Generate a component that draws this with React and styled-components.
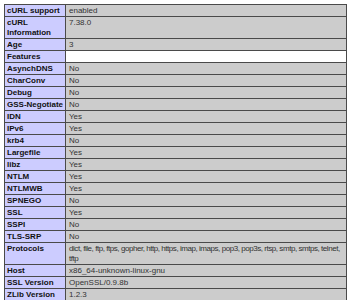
import React from "react";
import styled, { createGlobalStyle } from "styled-components";

const GlobalStyle = createGlobalStyle`
  body {
    margin: 0;
    background: #ffffff;
    font-family: "Liberation Sans", Arial, sans-serif;
  }
`;

const Page = styled.div`
  padding: 4px 0 0 4px;
`;

const Table = styled.table`
  border-collapse: collapse;
  width: 343px;
  table-layout: fixed;
`;

const Row = styled.tr``;

const Label = styled.td`
  width: 57px;
  background: #ccccff;
  color: #111;
  font-weight: bold;
  font-size: 8px;
  line-height: 10px;
  padding: 1px 1px 0 2px;
  border: 1px solid #4a4a4a;
  vertical-align: top;
  white-space: ${({ $wrap }) => ($wrap ? "normal" : "nowrap")};
  overflow: hidden;
`;

const Value = styled.td`
  background: ${({ $blank }) => ($blank ? "#ffffff" : "#cccccc")};
  color: #333;
  font-size: 8px;
  line-height: 10px;
  padding: 1px 1px 0 3px;
  border: 1px solid #4a4a4a;
  vertical-align: top;
  letter-spacing: ${({ $tight }) => ($tight ? "-0.45px" : "normal")};
`;

const rows = [
  ["cURL support", "enabled"],
  ["cURL Information", "7.38.0"],
  ["Age", "3"],
  ["Features", null],
  ["AsynchDNS", "No"],
  ["CharConv", "No"],
  ["Debug", "No"],
  ["GSS-Negotiate", "No"],
  ["IDN", "Yes"],
  ["IPv6", "Yes"],
  ["krb4", "No"],
  ["Largefile", "Yes"],
  ["libz", "Yes"],
  ["NTLM", "Yes"],
  ["NTLMWB", "Yes"],
  ["SPNEGO", "No"],
  ["SSL", "Yes"],
  ["SSPI", "No"],
  ["TLS-SRP", "No"],
  [
    "Protocols",
    "dict, file, ftp, ftps, gopher, http, https, imap, imaps, pop3, pop3s, rtsp, smtp, smtps, telnet, tftp",
  ],
  ["Host", "x86_64-unknown-linux-gnu"],
  ["SSL Version", "OpenSSL/0.9.8b"],
  ["ZLib Version", "1.2.3"],
];

const App = () => (
  <Page>
    <GlobalStyle />
    <Table>
      <tbody>
        {rows.map(([k, v]) => (
          <Row key={k}>
            <Label $wrap={k === "cURL Information"}>{k}</Label>
            <Value $blank={v === null} $tight={k === "Protocols"}>
              {v}
            </Value>
          </Row>
        ))}
      </tbody>
    </Table>
  </Page>
);

export default App;
